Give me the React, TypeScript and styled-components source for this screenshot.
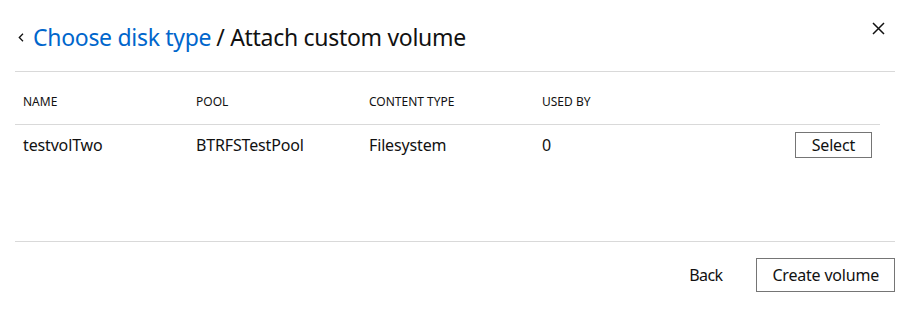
import React from "react";
import styled, { createGlobalStyle } from "styled-components";

const Global = createGlobalStyle`
  html, body { margin: 0; padding: 0; background: #fff; }
  body { font-family: "Noto Sans", "Open Sans", sans-serif; color: #111; }
  * { box-sizing: border-box; }
`;

const Modal = styled.div`
  width: 910px;
  height: 321px;
  padding: 0 15px;
  display: flex;
  flex-direction: column;
  background: #fff;
`;

const Header = styled.header`
  display: flex;
  align-items: flex-start;
  justify-content: space-between;
  height: 72px;
  border-bottom: 1px solid #d9d9d9;
  padding-top: 17px;
`;

const Title = styled.h2`
  margin: 0;
  display: flex;
  align-items: center;
  font-size: 23px;
  letter-spacing: -0.3px;
  font-weight: 400;
  line-height: 40px;
  color: #111;
`;

const BackChevron = styled.span`
  display: inline-flex;
  width: 16px;
  margin-left: 2px;
  align-items: center;
`;

const Crumb = styled.a`
  color: #0066cc;
  text-decoration: none;
  margin-right: 5px;
`;

const CloseButton = styled.button`
  border: 0;
  background: transparent;
  padding: 0;
  margin: 5px 10px 0 0;
  width: 13px;
  height: 13px;
  display: flex;
  cursor: pointer;
`;

const Table = styled.table`
  width: 865px;
  border-collapse: collapse;
  table-layout: fixed;
`;

const Th = styled.th`
  text-align: left;
  font-size: 12px;
  font-weight: 400;
  line-height: 16px;
  text-transform: uppercase;
  padding: 22px 8px 14px;
  border-bottom: 1px solid #d9d9d9;
  color: #111;
`;

const Td = styled.td<{ $right?: boolean }>`
  font-size: 16px;
  line-height: 24px;
  letter-spacing: -0.15px;
  padding: 7px 8px;
  vertical-align: middle;
  text-align: ${(p) => (p.$right ? "right" : "left")};
`;

const Body = styled.div`
  flex: 0 0 auto;
  height: 170px;
  border-bottom: 1px solid #d9d9d9;
`;

const Footer = styled.footer`
  display: flex;
  justify-content: flex-end;
  align-items: center;
  padding-top: 16px;
`;

const Button = styled.button<{ $base?: boolean; $small?: boolean }>`
  font-family: inherit;
  font-size: 16px;
  line-height: 24px;
  letter-spacing: -0.2px;
  color: #111;
  background: #fff;
  border: 1px solid ${(p) => (p.$base ? "transparent" : "#757575")};
  padding: ${(p) => (p.$small ? "0 16px" : "4px 15px")};
  height: ${(p) => (p.$small ? "26px" : "34px")};
  cursor: pointer;
`;

const BackButton = styled(Button)`
  margin-right: 18px;
  letter-spacing: -0.6px;
`;

export default function App() {
  return (
    <>
      <Global />
      <Modal>
        <Header>
          <Title>
            <BackChevron>
              <svg width="7" height="9" viewBox="0 0 7 9" fill="none">
                <path d="M6 0.8L2.3 4.5L6 8.2" stroke="#111" strokeWidth="1.3" />
              </svg>
            </BackChevron>
            <Crumb href="#">Choose disk type</Crumb>/ Attach custom volume
          </Title>
          <CloseButton aria-label="Close">
            <svg width="13" height="13" viewBox="0 0 13 13">
              <path d="M1 1L12 12M12 1L1 12" stroke="#111" strokeWidth="1.5" />
            </svg>
          </CloseButton>
        </Header>
        <Body>
          <Table>
            <thead>
              <tr>
                <Th>Name</Th>
                <Th>Pool</Th>
                <Th>Content type</Th>
                <Th>Used by</Th>
                <Th />
              </tr>
            </thead>
            <tbody>
              <tr>
                <Td>testvolTwo</Td>
                <Td>BTRFSTestPool</Td>
                <Td>Filesystem</Td>
                <Td>0</Td>
                <Td $right>
                  <Button $small>Select</Button>
                </Td>
              </tr>
            </tbody>
          </Table>
        </Body>
        <Footer>
          <BackButton $base>Back</BackButton>
          <Button>Create volume</Button>
        </Footer>
      </Modal>
    </>
  );
}
